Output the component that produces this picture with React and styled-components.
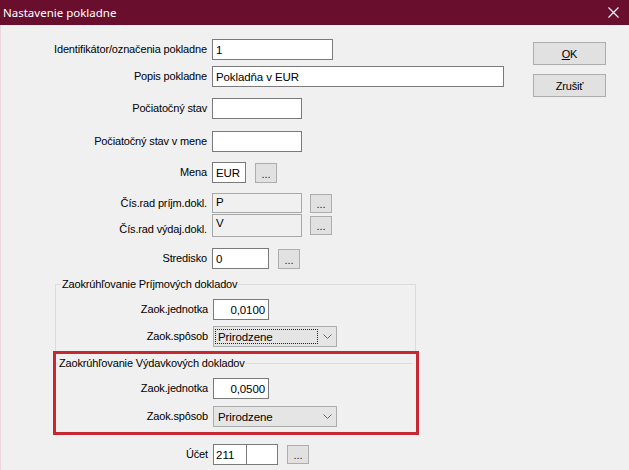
import React from 'react';
import styled, { createGlobalStyle } from 'styled-components';

const Global = createGlobalStyle`
  html, body { margin: 0; padding: 0; background: #f0f0f0; }
  body { width: 629px; height: 470px; overflow: hidden; }
  * { box-sizing: border-box; }
`;

const Window = styled.div`
  width: 629px;
  height: 470px;
  display: flex;
  flex-direction: column;
  background: #f0f0f0;
  overflow: hidden;
  font-family: "Liberation Sans", Arial, sans-serif;
  font-size: 11px;
  color: #000;
`;

const TitleBar = styled.div`
  height: 25px;
  flex: none;
  background: #6a0e2e;
  color: #fff;
  display: flex;
  align-items: center;
  justify-content: space-between;
  padding: 0 10px 0 3px;
  font-family: "Noto Sans", "Open Sans", sans-serif;
  font-size: 11.5px;
`;

const Body = styled.div`
  flex: 1;
  display: flex;
  border-left: 1px solid #ecd6dd;
`;

const Form = styled.div`
  width: 420px;
  padding-top: 14px;
  display: flex;
  flex-direction: column;
`;

const Side = styled.div`
  margin-left: auto;
  margin-right: 23px;
  padding-top: 17px;
  display: flex;
  flex-direction: column;
  gap: 9px;
`;

const Button = styled.div`
  width: 73px;
  height: 23px;
  background: #e1e1e1;
  border: 1px solid #adadad;
  display: flex;
  align-items: center;
  justify-content: center;
  letter-spacing: -0.15px;
`;

const Row = styled.div`
  display: grid;
  grid-template-columns: ${p => p.$lw || 206}px auto;
  column-gap: 5px;
  align-items: center;
  justify-content: start;
  margin-top: ${p => p.$mt || 0}px;
`;

const Label = styled.div`
  text-align: right;
  white-space: nowrap;
  letter-spacing: -0.15px;
  align-self: ${p => p.$end ? 'end' : 'center'};
  padding-bottom: ${p => p.$end ? 2 : 1}px;
`;

const Controls = styled.div`
  display: flex;
  align-items: center;
  gap: ${p => p.$gap || 9}px;
`;

const Field = styled.div`
  width: ${p => p.$w}px;
  height: ${p => p.$h || 21}px;
  background: ${p => p.$gray ? '#f0f0f0' : '#fff'};
  border: 1px solid ${p => p.$gray ? '#a8a8a8' : '#7a7a7a'};
  padding: ${p => p.$top ? '2px 3px 0' : '0 3px'};
  display: flex;
  align-items: ${p => p.$top ? 'flex-start' : 'center'};
  justify-content: ${p => p.$right ? 'flex-end' : 'flex-start'};
  white-space: nowrap;
  font-size: 11.5px;
  letter-spacing: -0.1px;
`;

const SplitField = styled.div`
  width: ${p => p.$w}px;
  height: 21px;
  background: #fff;
  border: 1px solid #7a7a7a;
  display: grid;
  grid-template-columns: 33px 1fr;
  font-size: 11.5px;
`;

const Segment = styled.div`
  display: flex;
  align-items: center;
  padding: 0 2px;
  border-right: ${p => p.$divider ? '1px solid #7a7a7a' : 'none'};
`;

const Dots = styled.div`
  width: 22px;
  height: ${p => p.$h || 20}px;
  background: #e1e1e1;
  border: 1px solid #adadad;
  display: flex;
  align-items: flex-end;
  justify-content: center;
  padding-bottom: 3px;
  line-height: 9px;
  color: #222;
`;

const Combo = styled.div`
  width: 124px;
  height: 21px;
  background: #e5e5e5;
  border: 1px solid #acacac;
  display: flex;
  align-items: center;
  padding: 0 4px 0 1px;
  gap: 5px;
`;

const ComboText = styled.div`
  flex: 1;
  height: 15px;
  display: flex;
  align-items: center;
  padding: 0 2px 0 2px;
  border: 1px dotted ${p => p.$focus ? '#222' : 'transparent'};
  letter-spacing: -0.1px;
  font-size: 11.5px;
`;

const GroupBox = styled.fieldset`
  margin: 9px 0 0 54px;
  width: 361px;
  min-width: 0;
  padding: 8px 0 4px 0;
  border: 1px solid #dcdcdc;
  border-bottom: none;
`;

const Legend = styled.legend`
  padding: 0 1px;
  margin-left: ${p => p.$ml}px;
  font-size: 11px;
  line-height: 13px;
  letter-spacing: -0.15px;
`;

const RedFrame = styled.div`
  margin-left: 52px;
  width: 366px;
  border: 3px solid #c42830;
  padding: 0 0 5px 0;
`;

const InnerGroup = styled.fieldset`
  margin: 3px 3px 0 0;
  min-width: 0;
  padding: 8px 0 0 0;
  border: none;
  border-top: 1px solid #dcdcdc;
`;

const Chevron = () => (
  <svg width="9" height="5" viewBox="0 0 9 5">
    <polyline points="0.5,0.5 4.5,4.5 8.5,0.5" fill="none" stroke="#666" strokeWidth="1" />
  </svg>
);

const CloseIcon = () => (
  <svg width="11" height="11" viewBox="0 0 11 11">
    <path d="M0.5 0.5 L10.5 10.5 M10.5 0.5 L0.5 10.5" stroke="#fff" strokeWidth="1.1" />
  </svg>
);

const RoundingRows = ({ unit, focus }) => (
  <>
    <Row $lw={152}>
      <Label>Zaok.jednotka</Label>
      <Field $w={56} $right>{unit}</Field>
    </Row>
    <Row $lw={152} $mt={focus ? 6 : 7}>
      <Label>Zaok.spôsob</Label>
      <Combo>
        <ComboText $focus={focus}>Prirodzene</ComboText>
        <Chevron />
      </Combo>
    </Row>
  </>
);

export default function App() {
  return (
    <Window>
      <Global />
      <TitleBar>
        <span>Nastavenie pokladne</span>
        <CloseIcon />
      </TitleBar>
      <Body>
        <Form>
          <Row>
            <Label>Identifikátor/označenia pokladne</Label>
            <Field $w={121}>1</Field>
          </Row>
          <Row $mt={6}>
            <Label>Popis pokladne</Label>
            <Field $w={292}>Pokladňa v EUR</Field>
          </Row>
          <Row $mt={11}>
            <Label>Počiatočný stav</Label>
            <Field $w={90} />
          </Row>
          <Row $mt={12}>
            <Label>Počiatočný stav v mene</Label>
            <Field $w={90} />
          </Row>
          <Row $mt={10}>
            <Label>Mena</Label>
            <Controls>
              <Field $w={34}>EUR</Field>
              <Dots>...</Dots>
            </Controls>
          </Row>
          <Row $mt={10}>
            <Label>Čís.rad príjm.dokl.</Label>
            <Controls $gap={8}>
              <Field $w={90} $h={20} $gray $top>P</Field>
              <Dots $h={19}>...</Dots>
            </Controls>
          </Row>
          <Row $mt={1}>
            <Label $end>Čís.rad výdaj.dokl.</Label>
            <Controls $gap={8}>
              <Field $w={90} $h={23} $gray $top>V</Field>
              <Dots $h={19}>...</Dots>
            </Controls>
          </Row>
          <Row $mt={11}>
            <Label>Stredisko</Label>
            <Controls>
              <Field $w={57}>0</Field>
              <Dots>...</Dots>
            </Controls>
          </Row>
          <GroupBox>
            <Legend $ml={5}>Zaokrúhľovanie Príjmových dokladov</Legend>
            <RoundingRows unit="0,0100" focus />
          </GroupBox>
          <RedFrame>
            <InnerGroup>
              <Legend $ml={2}>Zaokrúhľovanie Výdavkových dokladov</Legend>
              <RoundingRows unit="0,0500" />
            </InnerGroup>
          </RedFrame>
          <Row $lw={207} $mt={9}>
            <Label>Účet</Label>
            <Controls>
              <SplitField $w={65}>
                <Segment $divider>211</Segment>
                <Segment />
              </SplitField>
              <Dots $h={19}>...</Dots>
            </Controls>
          </Row>
        </Form>
        <Side>
          <Button><span><u>O</u>K</span></Button>
          <Button>Zrušiť</Button>
        </Side>
      </Body>
    </Window>
  );
}
